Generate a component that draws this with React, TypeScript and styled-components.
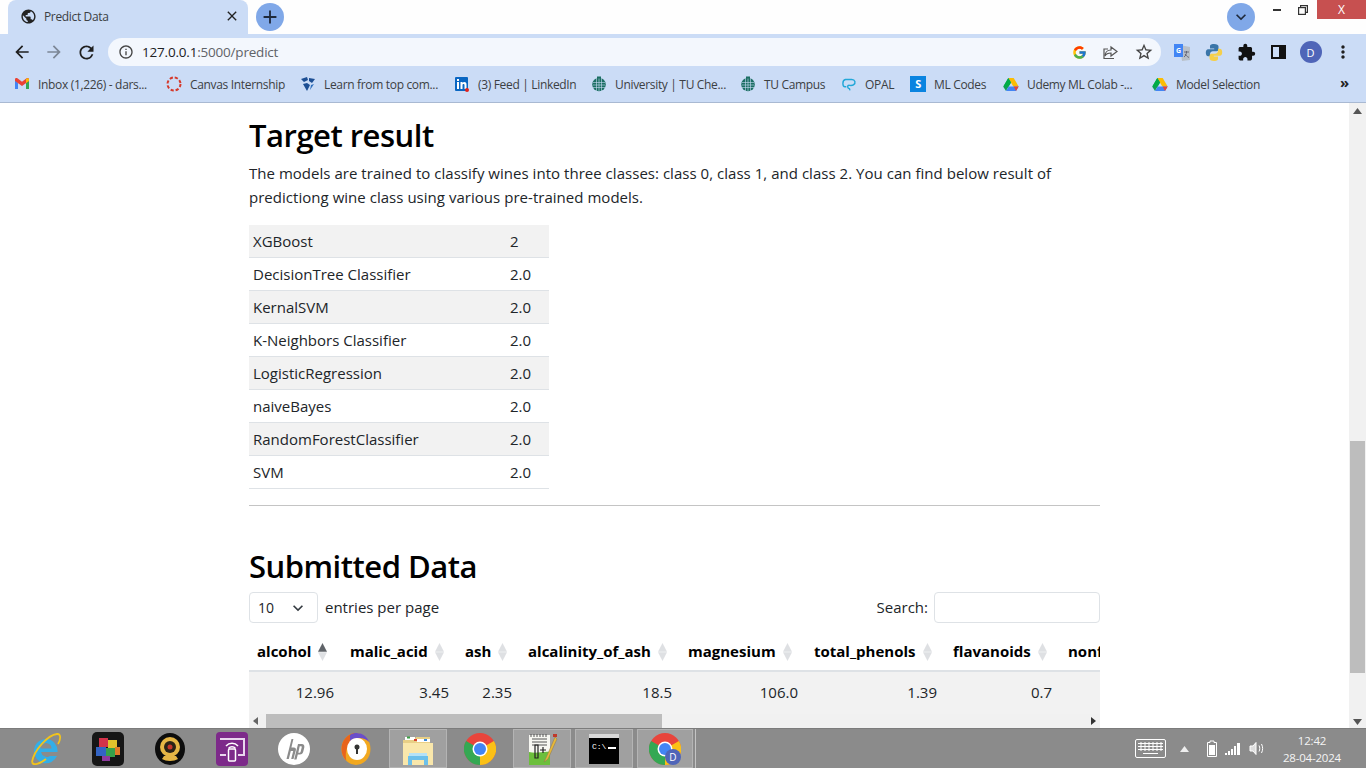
import React from "react";
import styled, { createGlobalStyle } from "styled-components";
import {
  MdArrowBack, MdArrowForward, MdRefresh, MdInfoOutline, MdStarBorder, MdExtension,
  MdClose, MdAdd, MdExpandMore, MdPublic, MdMoreVert,
} from "react-icons/md";
import { FcGoogle } from "react-icons/fc";

const Global = createGlobalStyle`
  html, body { margin: 0; padding: 0; height: 100%; overflow: hidden; background: #fff; }
  * { box-sizing: border-box; }
`;

const BODY_FONT = `"Open Sans", "Noto Sans", sans-serif`;
const CHROME_FONT = `"Open Sans", "Noto Sans", sans-serif`;

const Screen = styled.div`
  width: 1366px; height: 768px; display: flex; flex-direction: column; overflow: hidden;
  font-family: ${BODY_FONT}; color: #212529;
`;

/* ---- tab strip ---- */
const TabStrip = styled.div`
  height: 34px; flex: none; background: #fefefe; display: flex; align-items: flex-start; position: relative;
`;
const Tab = styled.div`
  width: 240px; height: 34px; margin-left: 8px; background: #cbdcf6; border-radius: 8px 8px 0 0;
  display: flex; align-items: center; padding: 0 8px 2px 12px; color: #3c4043;
  font: 12px ${CHROME_FONT}; letter-spacing: -0.35px;
`;
const TabTitle = styled.span` flex: 1; margin-left: 7px; `;
const RoundButton = styled.div<{ $ml: number }>`
  width: 28px; height: 28px; margin: 3px 0 0 ${(p) => p.$ml}px; border-radius: 50%; background: #80a8e8;
  display: flex; align-items: center; justify-content: center; color: #1f2a3c; flex: none;
`;
const Spacer = styled.div` flex: 1; `;
const WinButton = styled.div<{ $w: number; $ml?: number }>`
  width: ${(p) => p.$w}px; height: 19px; margin-left: ${(p) => p.$ml || 0}px; display: flex; align-items: center; justify-content: center; flex: none;
`;
const CloseButton = styled(WinButton)`
  background: #c75050; color: #fff; font: 400 12px ${CHROME_FONT};
`;
const MinGlyph = styled.span` width: 8px; height: 2px; background: #333; display: block; `;

/* ---- toolbar ---- */
const Toolbar = styled.div`
  height: 33px; flex: none; background: #cbdcf6; display: flex; align-items: center; padding: 3px 0 0 0; position: relative;
`;
const NavIcon = styled.div<{ $w: number; $c?: string }>`
  width: ${(p) => p.$w}px; display: flex; justify-content: center; align-items: center; flex: none; color: ${(p) => p.$c || "#1f1f1f"};
`;
const Omnibox = styled.div`
  width: 1053px; height: 28px; flex: none; border-radius: 14px; background: #f3f7fd; display: flex; align-items: center;
  padding: 0 7px 0 10px; margin: 0 5px 0 0; font: 13.5px ${CHROME_FONT}; letter-spacing: -0.2px; color: #202124;
`;
const UrlHost = styled.span` margin-left: 8px; `;
const UrlPath = styled.span` color: #5f6368; `;
const OmniActions = styled.div` margin-left: auto; display: flex; align-items: center; gap: 15px; color: #444; `;
const Avatar = styled.div<{ $s: number }>`
  width: ${(p) => p.$s}px; height: ${(p) => p.$s}px; border-radius: 50%; background: #4f65b8; color: #fff;
  display: flex; align-items: center; justify-content: center; font: 11px ${CHROME_FONT};
`;

/* ---- bookmarks ---- */
const Bookmarks = styled.div`
  height: 36px; flex: none; background: #cbdcf6; border-bottom: 1px solid #a9b9d2; display: flex; align-items: center;
  position: relative; padding: 0 0 1px 14px; font: 12px ${CHROME_FONT}; letter-spacing: -0.33px; color: #3c4043;
`;
const Bookmark = styled.div<{ $w: number }>`
  width: ${(p) => p.$w}px; display: flex; align-items: center; gap: 8px; flex: none; white-space: nowrap; overflow: hidden;
`;
const More = styled.div`
  position: absolute; right: 17px; top: 5px; font: 700 15px ${CHROME_FONT}; color: #222;
`;

/* ---- viewport ---- */
const Viewport = styled.div` height: 625px; flex: none; display: flex; overflow: hidden; background: #fff; `;
const Page = styled.main` flex: 1; min-width: 0; padding: 10px 0 0 249px; `;
const Container = styled.div` width: 851px; `;
const H2 = styled.h2`
  margin: 0; font: 600 31px/44px ${BODY_FONT}; letter-spacing: -0.5px; color: #000;
`;
const Para = styled.p`
  margin: 4px 0 16px; font: 400 15px/24px ${BODY_FONT}; letter-spacing: 0.03px; color: #212529;
`;
const ResultTable = styled.table`
  width: 300px; border-collapse: separate; border-spacing: 0; font: 400 15px/24px ${BODY_FONT}; table-layout: fixed;
`;
const ResultRow = styled.tr<{ $odd: boolean }>`
  background: ${(p) => (p.$odd ? "#f2f2f2" : "#fff")};
`;
const NameCell = styled.td` height: 33px; padding: 3px 4px 4px; width: 257px; border-bottom: 1px solid #dee2e6; `;
const ValCell = styled.td` height: 33px; padding: 3px 4px 4px; border-bottom: 1px solid #dee2e6; `;
const Rule = styled.hr` margin: 16px 0 38px; border: 0; border-top: 1px solid #c4c4c4; `;
const DtTop = styled.div`
  display: flex; justify-content: space-between; align-items: center; margin-top: 4px; height: 31px;
  font: 400 15px/24px ${BODY_FONT};
`;
const DtLeft = styled.div` display: flex; align-items: center; gap: 7px; `;
const DtText = styled.span` padding-bottom: 2px; `;
const Select = styled.div`
  width: 69px; height: 31px; border: 1px solid #dee2e6; border-radius: 4px; display: flex; align-items: center;
  justify-content: space-between; padding: 0 9px 0 8px; font-size: 14px; color: #212529;
`;
const SearchInput = styled.input`
  width: 166px; height: 31px; border: 1px solid #dee2e6; border-radius: 4px; margin-left: 6px; background: #fff; display: block;
`;
const DtRight = styled.label` display: flex; align-items: center; `;
const TableWrap = styled.div` width: 851px; overflow: hidden; margin-top: 12px; `;
const DataTable = styled.table`
  table-layout: fixed; width: 1000px; border-collapse: separate; border-spacing: 0; font: 400 15px/24px ${BODY_FONT};
`;
const Th = styled.th`
  height: 37px; padding: 0 0 3px 8px; text-align: left; white-space: nowrap; overflow: hidden;
  font-weight: 700; color: #000; border-bottom: 2px solid #dee2e6;
`;
const Td = styled.td`
  height: 42px; padding: 0 8px 2px; text-align: right; background: #f2f2f2; white-space: nowrap; overflow: hidden;
`;
const Col = styled.col<{ $w: number }>` width: ${(p) => p.$w}px; `;
const SortWrap = styled.span` display: inline-block; margin-left: 6px; vertical-align: -4px; line-height: 0; `;

const HScroll = styled.div`
  height: 14px; width: 851px; background: #f1f1f1; display: flex; align-items: center; padding: 0 4px; color: #555;
`;
const HThumb = styled.div` height: 14px; width: 396px; background: #bdbdbd; margin-left: 8px; `;

const VScroll = styled.div`
  width: 17px; flex: none; background: #f1f1f1; display: flex; flex-direction: column; align-items: center; padding-top: 5px;
`;
const VThumb = styled.div` width: 15px; height: 232px; background: #bdbdbd; margin-top: 324px; `;
const VSpacer = styled.div` flex: 1; `;
const ArrowBox = styled.div` height: 9px; display: flex; align-items: flex-start; `;

/* ---- taskbar ---- */
const Taskbar = styled.footer`
  height: 40px; flex: none; background: #8b8b8b; display: flex; align-items: stretch; padding: 0 0 0 17px; position: relative;
  border-top: 1px solid #7c7c7c;
`;
const TaskItem = styled.div<{ $active?: boolean; $stack?: boolean }>`
  width: ${(p) => (p.$stack ? 56 : 58)}px; margin: 0 4px 0 0; flex: none; display: flex; align-items: center; justify-content: center;
  ${(p) => p.$active ? "background: #a0a0a0; border: 1px solid #b4b4b4;" : ""}
  ${(p) => p.$stack ? "box-shadow: 2px 0 0 #8b8b8b, 3px 0 0 #c4c4c4;" : ""}
`;
const Tray = styled.div`
  margin-left: auto; display: flex; align-items: center; color: #fff;
`;
const TrayIcon = styled.div<{ $w: number; $ml?: number }>` width: ${(p) => p.$w}px; margin-left: ${(p) => p.$ml || 0}px; display: flex; justify-content: center; flex: none; `;
const Clock = styled.div`
  width: 84px; margin-left: 5px; text-align: center; font: 11.5px/17px ${CHROME_FONT}; letter-spacing: -0.2px; color: #f4f4f4; flex: none; margin-right: 12px;
`;

/* ---- drawings ---- */
const SortIcon = ({ asc }: { asc?: boolean }) => (
  <svg width="11" height="18" viewBox="0 0 11 18">
    <path d="M5.5 0L10 8.700H1z" fill={asc ? "#5f6368" : "#dee0e3"} />
    <path d="M5.5 18L10 9.300H1z" fill="#dee0e3" />
  </svg>
);
const Gmail = () => (
  <svg width="16" height="16" viewBox="0 0 16 16">
    <path d="M1 4v9h3V7z" fill="#4285f4" /><path d="M12 7v6h3V4z" fill="#34a853" />
    <path d="M1 3.5V5l7 5 7-5V3.5C15 2 13.5 1.7 12.6 2.3L8 5.7 3.4 2.3C2.5 1.7 1 2 1 3.5z" fill="#ea4335" />
    <path d="M12 3v4l3-2V3.5C15 2 13 1.8 12 3z" fill="#fbbc04" />
  </svg>
);
const Canvas = () => (
  <svg width="16" height="16" viewBox="0 0 16 16">
    <circle cx="8" cy="8" r="6.5" fill="none" stroke="#d5392b" strokeWidth="2" strokeDasharray="3.2 1.9" />
  </svg>
);
const Learn = () => (
  <svg width="16" height="16" viewBox="0 0 16 16">
    <path d="M1 3l6-2 1 3-4 2zM9 2l6 1-3 4-3-2zM3 8l4-1 3 2-3 6z" fill="#1d4f94" /><path d="M11 9l3-1-4 6z" fill="#2e6fbd" />
  </svg>
);
const LinkedIn = () => (
  <svg width="16" height="16" viewBox="0 0 16 16">
    <rect x="1" y="1" width="13" height="14" rx="1" fill="#0a66c2" />
    <path d="M3 6h2v7H3zM3 3h2v2H3zM6.5 6h2v1c1-1.4 4-1.3 4 1.5V13h-2V9c0-1.4-2-1.4-2 0v4h-2z" fill="#fff" />
    <circle cx="13" cy="14" r="2" fill="#e3221b" />
  </svg>
);
const Uni = () => (
  <svg width="16" height="16" viewBox="0 0 16 16">
    <circle cx="8" cy="8.5" r="6.8" fill="#1b6e63" />
    <path d="M2 6.500h12M2 9h12M2 11.500h12M5.500 2v13M8 2v13M10.500 2v13" stroke="#cbdcf6" strokeWidth=".6" />
    <rect x="6" y="0.5" width="4" height="2" fill="#1b6e63" />
  </svg>
);
const Opal = () => (
  <svg width="16" height="16" viewBox="0 0 18 16">
    <path d="M6 11H4.500C1.500 11 1 4 5 3h7c4 0 5 4 2 6-1.500 1-4 .5-5 .5-2 0-2 3 0 3.500 1 .2 1 1.500.5 2" fill="none" stroke="#22a7d8" strokeWidth="1.600" />
  </svg>
);
const SBox = () => (
  <svg width="16" height="16" viewBox="0 0 16 16">
    <rect width="16" height="16" fill="#0a84e0" />
    <text x="8" y="12" textAnchor="middle" fontSize="11" fontWeight="700" fill="#fff" fontFamily="Open Sans">S</text>
  </svg>
);
const Drive = () => (
  <svg width="16" height="15" viewBox="0 0 16 15">
    <path d="M5.300 1h5.400l5 8.500h-5.400z" fill="#fbbc04" /><path d="M5.300 1L.3 9.700 3 14l5-8.600z" fill="#0f9d58" />
    <path d="M3 14h10l2.700-4.500H5.700z" fill="#4285f4" /><path d="M5.300 1l2.700 4.400L5.600 9.500H.3z" fill="#00ac47" />
    <path d="M13 14l2.700-4.500h-5z" fill="#ea4335" />
  </svg>
);
const Share = () => (
  <svg width="17" height="17" viewBox="0 0 17 17" fill="none" stroke="#555" strokeWidth="1.200">
    <path d="M9 6V3l6 4.500-6 4.500V9c-3 0-5 1-6 3 0-3 2-6 6-6z" /><path d="M12 14.500H2V5h4" />
  </svg>
);
const Translate = () => (
  <svg width="20" height="20" viewBox="0 0 20 20">
    <path d="M8 3l10 2v13l-8 1z" fill="#b9c0c9" /><path d="M2 2h9v13H2z" fill="#4285f4" />
    <text x="6.500" y="11" textAnchor="middle" fontSize="7" fontWeight="700" fill="#fff" fontFamily="Open Sans">G</text>
    <path d="M12 10h5M14.500 9v1c0 2-1 4-2.500 5M13 12c1 1.500 2 2.500 4 3.500" stroke="#556" strokeWidth=".8" fill="none" />
  </svg>
);
const Python = () => (
  <svg width="18" height="19" viewBox="0 0 18 19">
    <path d="M9 1C5.500 1 5 2.300 5 3.500V5.500h4.200V6.300H3.200C1.500 6.300 .8 8 .8 9.800s.8 3.500 2.400 3.500H5v-2c0-1.700 1.400-3 3-3h3.500c1.200 0 2-1 2-2V3.500C13.500 2 12 1 9 1z" fill="#3a75a8" />
    <path d="M9 18c3.500 0 4-1.300 4-2.500v-2H8.800v-.8h6c1.700 0 2.400-1.700 2.400-3.500s-.8-3.500-2.400-3.500H13v2c0 1.700-1.400 3-3 3H6.500c-1.200 0-2 1-2 2v2.300C4.500 17 6 18 9 18z" fill="#f5cf4a" />
  </svg>
);
const SidePanel = () => (
  <svg width="15" height="14" viewBox="0 0 15 14">
    <rect x="1" y="1" width="13" height="12" fill="none" stroke="#111" strokeWidth="2" /><rect x="8" y="1" width="6" height="12" fill="#111" />
  </svg>
);
const Restore = () => (
  <svg width="10" height="10" viewBox="0 0 10 10" fill="none" stroke="#333" strokeWidth="1.200">
    <rect x=".6" y="2.600" width="6.800" height="6.800" /><path d="M2.600 2.600V.6h6.800v6.800H7.400" />
  </svg>
);
const Ie = () => (
  <svg width="32" height="34" viewBox="0 0 32 34">
    <path d="M16 7a12 12 0 0 0-12 12 12 12 0 0 0 23 5h-7a6 6 0 0 1-9-4h16.500A12 12 0 0 0 16 7zm-5.500 9.500a5.500 5.500 0 0 1 11 0z" fill="#33aee8" fillRule="evenodd" />
    <path d="M2 30C4 18 18 3 27 2c5-.5 3 7 1 10M2 30c1 4 8 2 14-3" fill="none" stroke="#f2c31c" strokeWidth="1.800" />
  </svg>
);
const Puzzle = () => (
  <svg width="32" height="34" viewBox="0 0 32 34">
    <rect width="32" height="34" rx="5" fill="#161616" />
    <rect x="7" y="6" width="9" height="9" fill="#d3324a" /><rect x="16" y="8" width="9" height="8" fill="#e2c22c" />
    <rect x="4" y="15" width="10" height="9" fill="#3364c4" /><rect x="14" y="16" width="9" height="9" fill="#37a04a" />
    <rect x="23" y="15" width="5" height="8" fill="#e07a28" /><rect x="10" y="24" width="8" height="5" fill="#8e3a9e" />
  </svg>
);
const Cam = () => (
  <svg width="32" height="34" viewBox="0 0 32 34">
    <ellipse cx="16" cy="17" rx="15" ry="16" fill="#0d0d0d" />
    <circle cx="16" cy="15" r="10" fill="#e6b645" /><circle cx="16" cy="15" r="6" fill="#2a2216" /><circle cx="16" cy="15" r="2.500" fill="#c4352c" />
    <path d="M8 27c4 2.500 12 2.500 16 0l-2-3H10z" fill="#e6b645" />
  </svg>
);
const Wireless = () => (
  <svg width="32" height="34" viewBox="0 0 32 34">
    <rect width="32" height="34" rx="4" fill="#7d2a8a" />
    <path d="M4 7h24v16h-6M10 23H4z" fill="none" stroke="#e9d6ee" strokeWidth="2" />
    <rect x="12.500" y="17" width="7" height="12" rx="1" fill="none" stroke="#fff" strokeWidth="1.500" />
    <path d="M10 14a8 8 0 0 1 12 0M12.500 16.500a4.500 4.500 0 0 1 7 0" fill="none" stroke="#fff" strokeWidth="1.500" />
  </svg>
);
const Hp = () => (
  <svg width="32" height="32" viewBox="0 0 32 32">
    <circle cx="16" cy="16" r="16" fill="#fff" />
    <path d="M13.500 6l-5 20h2.300l2-8h2.400l-2 8h2.300l2.400-9c.3-1.500-.5-2.500-2-2.500h-2.500l2-8.500zM20 11l-3.800 15.500h2.300l1.300-5h2c2 0 3-1 3.500-3l1-4c.4-2-.5-3.500-2.500-3.500zm1.700 2.200h1.300c.6 0 .8.500.7 1.200l-1 4c-.2.800-.6 1.300-1.300 1.300h-1.100z" fill="#8b8b8b" fillRule="evenodd" />
  </svg>
);
const Avast = () => (
  <svg width="30" height="34" viewBox="0 0 30 34">
    <ellipse cx="15" cy="17" rx="14.500" ry="16" fill="#f2a81f" />
    <path d="M15 1C7 1 .5 8 .5 17c0 5 2 9 5 12C3 18 8 8 15 8z" fill="#e8641c" />
    <path d="M9 3c6-4 16-2 19 7C24 6 16 4 9 9z" fill="#6a4fc9" />
    <ellipse cx="16" cy="17" rx="10" ry="11" fill="#fff" />
    <circle cx="16" cy="15" r="2.500" fill="#333" /><rect x="15" y="16" width="2" height="6" fill="#333" />
  </svg>
);
const Folder = () => (
  <svg width="32" height="34" viewBox="0 0 32 34">
    <path d="M1 8h11l2-3h14v24H1z" fill="#e8cf86" /><path d="M1 11h30v22H1z" fill="#f9e7ab" />
    <rect x="3" y="5" width="10" height="3" fill="#fff" /><rect x="15" y="7" width="13" height="3" fill="#fff" />
    <rect x="5" y="4.500" width="3" height="2" fill="#3ca046" /><rect x="12" y="7" width="3" height="2" fill="#d8402c" /><rect x="22" y="7" width="3" height="2" fill="#3c8ad8" />
    <path d="M6 33v-9h20v9h-4v-5H10v5z" fill="#6cc0ea" /><rect x="7" y="21" width="18" height="3" fill="#b5e2f6" />
  </svg>
);
const Chrome = ({ badge }: { badge?: boolean }) => (
  <svg width="32" height="32" viewBox="0 0 32 32">
    <circle cx="16" cy="16" r="16" fill="#e8453c" />
    <path d="M16 16L2.100 8A16 16 0 0 0 16 32z" fill="#34a853" />
    <path d="M16 16V32A16 16 0 0 0 29.900 8z" fill="#fbc116" />
    <circle cx="16" cy="16" r="7.500" fill="#fff" /><circle cx="16" cy="16" r="6" fill="#4285f4" />
    {badge && <><circle cx="24" cy="24" r="8" fill="#4f65b8" /><text x="24" y="27.500" textAnchor="middle" fontSize="10" fill="#fff" fontFamily="Open Sans">D</text></>}
  </svg>
);
const Notepad = () => (
  <svg width="32" height="34" viewBox="0 0 32 34">
    <path d="M3 3h21v30H3z" fill="#f7f7f2" /><path d="M3 20c8 2 14-1 21 0v13H3z" fill="#6cbf3c" />
    <path d="M5 2v3M8 2v3M11 2v3M14 2v3M17 2v3M20 2v3M6 7h15M6 10h15M6 13h15" stroke="#555" strokeWidth="1" />
    <path d="M9 13v13h3V13zM14 18h6M17 15v6" stroke="#222" strokeWidth="1.200" fill="none" />
    <path d="M29 5l-9 21-2 4 4-3 9-20z" fill="#e8b838" stroke="#875" strokeWidth=".5" /><rect x="27" y="2" width="4" height="3" fill="#c0392b" />
  </svg>
);
const Cmd = () => (
  <svg width="30" height="30" viewBox="0 0 30 30">
    <rect width="30" height="30" fill="#000" /><rect width="30" height="4" fill="#d8d8d8" />
    <text x="3" y="15" fontFamily="Liberation Mono" fontSize="8" fill="#fff">C:\</text>
    <rect x="19" y="13" width="8" height="2" fill="#fff" />
  </svg>
);
const Keyboard = () => (
  <svg width="31" height="19" viewBox="0 0 31 19" fill="none" stroke="#fff">
    <rect x=".5" y=".5" width="30" height="18" rx="1.500" />
    <path d="M3 4.500h25M3 7.500h25M3 10.500h25M6 3v9M10 3v9M14 3v9M18 3v9M22 3v9M26 3v9M8 14.500h15" strokeWidth="1" />
  </svg>
);
const Battery = () => (
  <svg width="10" height="17" viewBox="0 0 10 17"><path d="M3 1h4v1.500h2.500v14H.5v-14H3z" fill="none" stroke="#fff" /><rect x="2" y="5" width="6" height="10" fill="#fff" /></svg>
);
const Signal = () => (
  <svg width="16" height="12" viewBox="0 0 16 12" fill="#fff"><rect x="0" y="10" width="2" height="2" /><rect x="3" y="8" width="2" height="4" /><rect x="6" y="6" width="2" height="6" /><rect x="9" y="3" width="2" height="9" /><rect x="12" y="0" width="3" height="12" /></svg>
);
const Speaker = () => (
  <svg width="16" height="15" viewBox="0 0 16 15" fill="none" stroke="#fff"><path d="M1 5h3l3-3.500v12L4 10H1z" fill="#ddd" /><path d="M10 4.500c1 2 1 4 0 6M12.500 3c1.500 3 1.500 6 0 9" /></svg>
);
const TriUp = ({ c = "#555" }: { c?: string }) => <svg width="9" height="6" viewBox="0 0 9 6"><path d="M4.500 0L9 6H0z" fill={c} /></svg>;
const TriDown = () => <svg width="9" height="6" viewBox="0 0 9 6"><path d="M4.500 6L9 0H0z" fill="#555" /></svg>;
const TriLeft = () => <svg width="5" height="8" viewBox="0 0 5 8"><path d="M0 4l5-4v8z" fill="#666" /></svg>;
const TriRight = () => <svg width="5" height="8" viewBox="0 0 5 8"><path d="M5 4L0 0v8z" fill="#333" /></svg>;

/* ---- data ---- */
const results: [string, string][] = [
  ["XGBoost", "2"], ["DecisionTree Classifier", "2.0"], ["KernalSVM", "2.0"], ["K-Neighbors Classifier", "2.0"],
  ["LogisticRegression", "2.0"], ["naiveBayes", "2.0"], ["RandomForestClassifier", "2.0"], ["SVM", "2.0"],
];
const columns: [string, number, string][] = [
  ["alcohol", 93, "12.96"], ["malic_acid", 115, "3.45"], ["ash", 63, "2.35"], ["alcalinity_of_ash", 160, "18.5"],
  ["magnesium", 126, "106.0"], ["total_phenols", 139, "1.39"], ["flavanoids", 115, "0.7"], ["nonflavanoid_phenols", 189, ""],
];
const marks: [React.ReactNode, string, number][] = [
  [<Gmail />, "Inbox (1,226) - dars...", 152], [<Canvas />, "Canvas Internship", 134], [<Learn />, "Learn from top com...", 154],
  [<LinkedIn />, "(3) Feed | LinkedIn", 137], [<Uni />, "University | TU Che...", 149], [<Uni />, "TU Campus", 101],
  [<Opal />, "OPAL", 69], [<SBox />, "ML Codes", 93], [<Drive />, "Udemy ML Colab -...", 149], [<Drive />, "Model Selection", 110],
];
const tasks: [React.ReactNode, boolean][] = [
  [<Ie />, false], [<Puzzle />, false], [<Cam />, false], [<Wireless />, false], [<Hp />, false], [<Avast />, false],
  [<Folder />, true], [<Chrome />, false], [<Notepad />, true], [<Cmd />, true], [<Chrome badge />, true],
];

export default function App() {
  return (
    <Screen>
      <Global />
      <TabStrip>
        <Tab>
          <MdPublic size={17} color="#222" />
          <TabTitle>Predict Data</TabTitle>
          <MdClose size={16} color="#222" />
        </Tab>
        <RoundButton $ml={8}><MdAdd size={22} /></RoundButton>
        <Spacer />
        <RoundButton $ml={0}><MdExpandMore size={20} /></RoundButton>
        <WinButton $w={22} $ml={11}><MinGlyph /></WinButton>
        <WinButton $w={29}><Restore /></WinButton>
        <CloseButton $w={49}>X</CloseButton>
      </TabStrip>
      <Toolbar>
        <NavIcon $w={44}><MdArrowBack size={20} /></NavIcon>
        <NavIcon $w={20} $c="#7c8796"><MdArrowForward size={20} /></NavIcon>
        <NavIcon $w={44}><MdRefresh size={21} /></NavIcon>
        <Omnibox>
          <MdInfoOutline size={16} color="#444" />
          <UrlHost>127.0.0.1<UrlPath>:5000/predict</UrlPath></UrlHost>
          <OmniActions><FcGoogle size={15} /><Share /><MdStarBorder size={20} /></OmniActions>
        </Omnibox>
        <NavIcon $w={32}><Translate /></NavIcon>
        <NavIcon $w={32}><Python /></NavIcon>
        <NavIcon $w={32}><MdExtension size={19} color="#111" /></NavIcon>
        <NavIcon $w={32}><SidePanel /></NavIcon>
        <NavIcon $w={33}><Avatar $s={22}>D</Avatar></NavIcon>
        <NavIcon $w={32}><MdMoreVert size={20} /></NavIcon>
      </Toolbar>
      <Bookmarks>
        {marks.map(([icon, text, w], i) => (
          <Bookmark key={i} $w={w}>{icon}<span>{text}</span></Bookmark>
        ))}
        <More>»</More>
      </Bookmarks>
      <Viewport>
        <Page>
          <Container>
            <H2>Target result</H2>
            <Para>
              The models are trained to classify wines into three classes: class 0, class 1, and class 2. You can find below result of
              predictiong wine class using various pre-trained models.
            </Para>
            <ResultTable>
              <tbody>
                {results.map(([name, val], i) => (
                  <ResultRow key={name} $odd={i % 2 === 0}>
                    <NameCell>{name}</NameCell>
                    <ValCell>{val}</ValCell>
                  </ResultRow>
                ))}
              </tbody>
            </ResultTable>
            <Rule />
            <H2>Submitted Data</H2>
            <DtTop>
              <DtLeft>
                <Select>10<MdExpandMore size={20} color="#343a40" /></Select>
                <DtText>entries per page</DtText>
              </DtLeft>
              <DtRight><DtText>Search:</DtText><SearchInput /></DtRight>
            </DtTop>
            <TableWrap>
              <DataTable>
                <colgroup>{columns.map(([n, w]) => <Col key={n} $w={w} />)}</colgroup>
                <thead>
                  <tr>{columns.map(([n], i) => (
                    <Th key={n}>{n}{i < 7 && <SortWrap><SortIcon asc={i === 0} /></SortWrap>}</Th>
                  ))}</tr>
                </thead>
                <tbody>
                  <tr>{columns.map(([n, , v]) => <Td key={n}>{v}</Td>)}</tr>
                </tbody>
              </DataTable>
            </TableWrap>
            <HScroll>
              <TriLeft /><HThumb /><Spacer /><TriRight />
            </HScroll>
          </Container>
        </Page>
        <VScroll>
          <ArrowBox><TriUp /></ArrowBox>
          <VThumb />
          <VSpacer />
          <ArrowBox><TriDown /></ArrowBox>
        </VScroll>
      </Viewport>
      <Taskbar>
        {tasks.map(([icon, active], i) => (
          <TaskItem key={i} $active={active} $stack={i === tasks.length - 1}>{icon}</TaskItem>
        ))}
        <Tray>
          <TrayIcon $w={31}><Keyboard /></TrayIcon>
          <TrayIcon $w={9} $ml={14}><TriUp c="#eee" /></TrayIcon>
          <TrayIcon $w={10} $ml={18}><Battery /></TrayIcon>
          <TrayIcon $w={16} $ml={8}><Signal /></TrayIcon>
          <TrayIcon $w={16} $ml={8}><Speaker /></TrayIcon>
          <Clock>12:42<br />28-04-2024</Clock>
        </Tray>
      </Taskbar>
    </Screen>
  );
}
